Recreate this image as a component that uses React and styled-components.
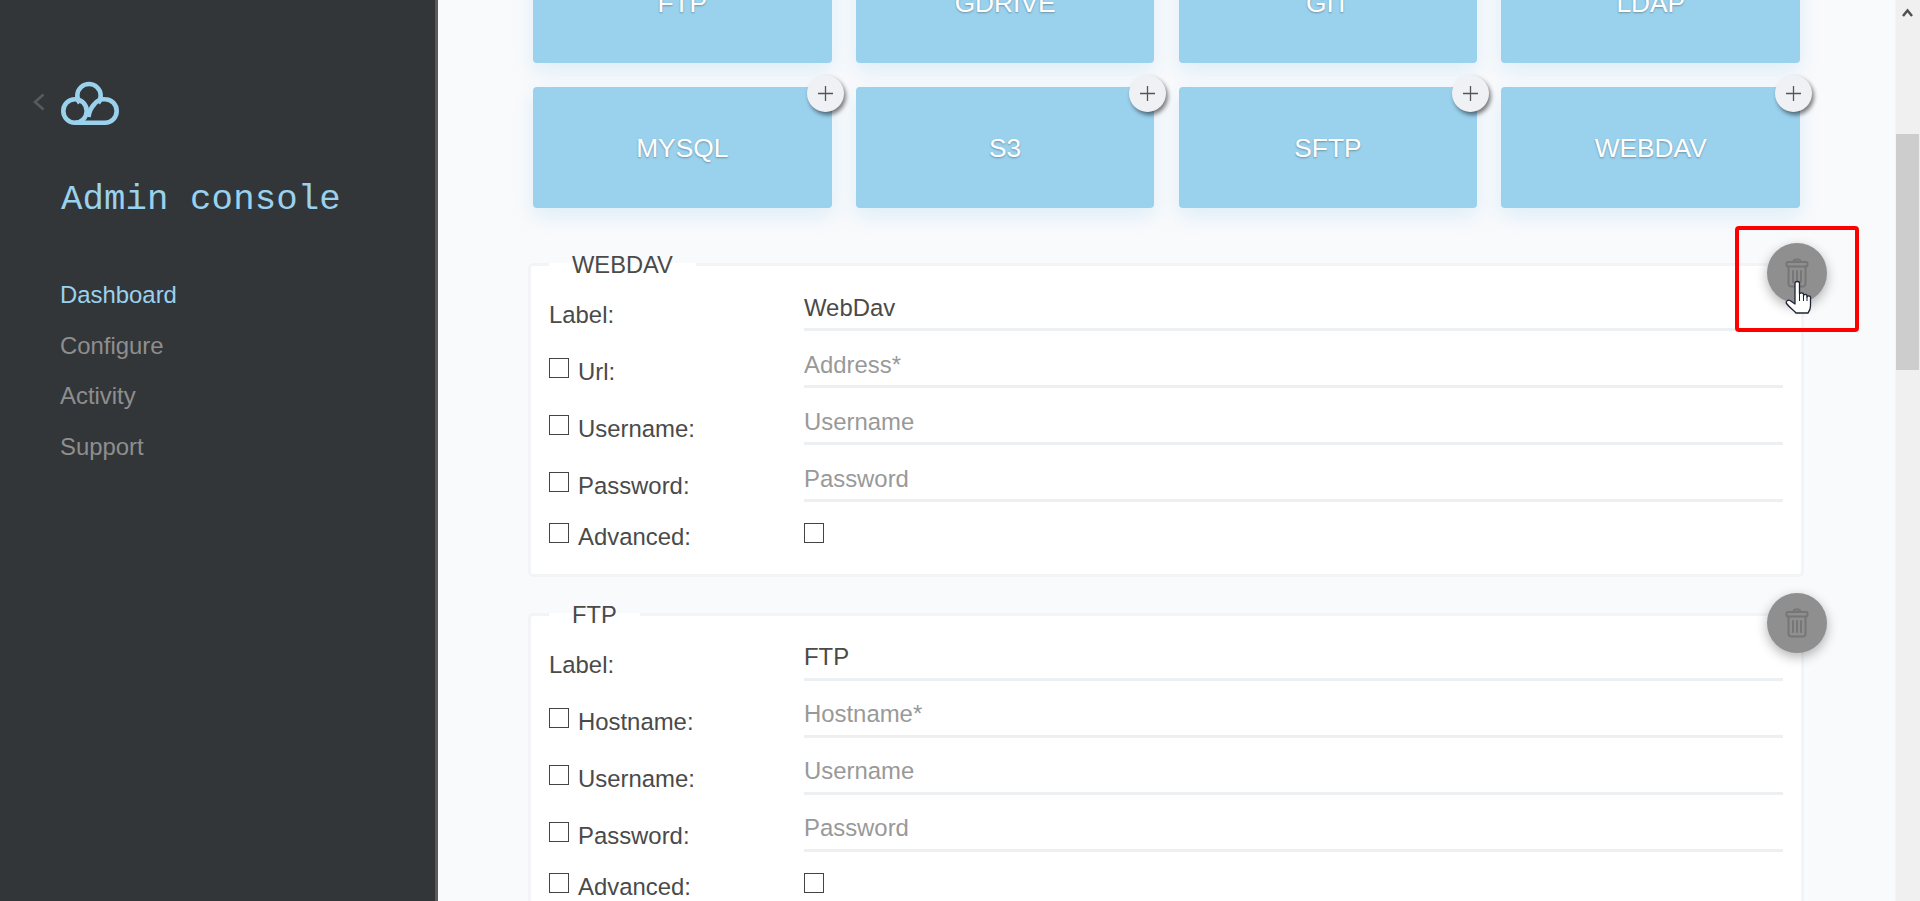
import React from 'react';
import styled, { createGlobalStyle } from 'styled-components';

const GlobalStyle = createGlobalStyle`
  html, body {
    margin: 0;
    height: 100%;
    overflow: hidden;
  }
  body {
    font-family: "Liberation Sans", Arial, sans-serif;
    color: #4a4a4a;
  }
  * {
    box-sizing: border-box;
  }
`;

const Page = styled.div`
  display: flex;
  height: 901px;
  overflow: hidden;
`;

const Sidebar = styled.aside`
  flex: 0 0 438px;
  background: #333639;
  border-right: 3px solid #5a5a5a;
  padding: 81px 0 0 60px;
`;

const LogoRow = styled.div`
  position: relative;
  height: 46px;
`;

const Collapse = styled.svg`
  position: absolute;
  left: -27px;
  top: 12px;
`;

const Title = styled.h1`
  margin: 51px 0 0 1px;
  font-family: "Liberation Mono", monospace;
  font-weight: 400;
  font-size: 35.7px;
  letter-spacing: 0.1px;
  line-height: 44px;
  white-space: nowrap;
  color: #9ad1ed;
`;

const Nav = styled.nav`
  display: flex;
  flex-direction: column;
  margin-top: 48px;
`;

const NavItem = styled.a`
  font-size: 23.9px;
  line-height: 50.6px;
  color: ${p => (p.$active ? '#9ad1ed' : '#8e8e8e')};
`;

const Main = styled.main`
  flex: 1;
  background: #f9fafc;
  padding: 0 95px;
  overflow: hidden;
`;

const Tiles = styled.div`
  display: grid;
  grid-template-columns: repeat(4, 298.5px);
  justify-content: space-between;
  grid-auto-rows: 121px;
  row-gap: 24px;
  margin-top: -58px;
  margin-bottom: 55px;
`;

const Tile = styled.div`
  position: relative;
  display: flex;
  align-items: center;
  justify-content: center;
  padding-top: 1px;
  background: #9ad1ed;
  border-radius: 4px;
  box-shadow: 0 8px 20px rgba(154, 209, 237, 0.3);
  color: #fff;
  font-size: 26.3px;
  text-shadow: 0 1px 2px rgba(0, 0, 0, 0.3);
`;

const AddButton = styled.button`
  position: absolute;
  top: -12px;
  right: -12px;
  display: flex;
  align-items: center;
  justify-content: center;
  width: 37px;
  height: 37px;
  padding: 0;
  border: 0;
  border-radius: 50%;
  background: #f0f1f4;
  box-shadow: 2px 3px 4px rgba(0, 0, 0, 0.5);
`;

const Panel = styled.section`
  position: relative;
  margin: 0 -4px 35.5px -5px;
  padding: 8px 18px 0;
  height: 314px;
  background: #fff;
  border: 3px solid #f3f4f7;
  border-radius: 5px;
`;

const Legend = styled.div`
  position: absolute;
  top: -3px;
  left: 18px;
  height: 6px;
  padding: 0 23px;
  background: #fff;
  font-size: 23.7px;
  line-height: 4px;
`;

const Row = styled.div`
  display: grid;
  grid-template-columns: 255px 1fr;
  align-items: end;
  height: ${p => (p.$short ? '51px' : '57px')};
`;

const FieldLabel = styled.label`
  display: flex;
  align-items: flex-start;
  padding-bottom: 2px;
  font-size: 23.9px;
  line-height: 28px;
`;

const Check = styled.input.attrs({ type: 'checkbox' })`
  appearance: none;
  flex: none;
  width: 20px;
  height: 20px;
  margin: 0 9px 0 0;
  background: #fff;
  border: 1.5px solid #444;
`;

const TextField = styled.input`
  width: 100%;
  height: 40px;
  padding: 0 0 4px;
  border: 0;
  border-bottom: 3px solid #edf0f3;
  outline: none;
  background: none;
  font: inherit;
  font-size: 23.9px;
  color: #4a4a4a;
  &::placeholder {
    color: #999;
    opacity: 1;
  }
`;

const AdvancedToggle = styled.div`
  display: flex;
  padding-bottom: 10px;
`;

const TrashButton = styled.button`
  position: absolute;
  top: -23px;
  right: -26px;
  display: flex;
  align-items: center;
  justify-content: center;
  width: 60px;
  height: 60px;
  padding: 0;
  border: 0;
  border-radius: 50%;
  background: #8f8f8f;
  box-shadow: 0 4px 12px rgba(0, 0, 0, 0.3);
`;

const Highlight = styled.div`
  position: absolute;
  top: -17px;
  left: -32px;
  width: 124px;
  height: 106px;
  border: 4px solid #f00;
  border-radius: 4px;
`;

const Pointer = styled.svg`
  position: absolute;
  left: 18px;
  top: 37px;
`;

const Scrollbar = styled.div`
  flex: 0 0 25px;
  display: flex;
  flex-direction: column;
  background: #f0f0f0;
  border-left: 1px solid #f4f4f4;
  padding-right: 1px;
`;

const ScrollArrow = styled.div`
  display: flex;
  justify-content: center;
  height: 134px;
  padding-top: 8px;
`;

const ScrollThumb = styled.div`
  height: 236px;
  background: #cdcdcd;
`;

const tileRows = ['FTP', 'GDRIVE', 'GIT', 'LDAP', 'MYSQL', 'S3', 'SFTP', 'WEBDAV'];

const panels = [
  {
    name: 'WEBDAV',
    label: 'WebDav',
    fields: [
      { title: 'Url:', placeholder: 'Address*' },
      { title: 'Username:', placeholder: 'Username' },
      { title: 'Password:', placeholder: 'Password' }
    ]
  },
  {
    name: 'FTP',
    label: 'FTP',
    fields: [
      { title: 'Hostname:', placeholder: 'Hostname*' },
      { title: 'Username:', placeholder: 'Username' },
      { title: 'Password:', placeholder: 'Password' }
    ]
  }
];

const Logo = () => (
  <svg width="60" height="46" viewBox="0 0 60 46" fill="none" stroke="#9ad1ed" strokeWidth="4.6">
    <circle cx="15" cy="30" r="11.7" />
    <path d="M15 41.7H45A11.7 11.7 0 0 0 45 18.3A11.7 11.7 0 0 0 34.500 23C31 26.500 29 31 28.500 36" />
    <path d="M19.800 22A11.700 11.700 0 1 1 38.200 22" />
  </svg>
);

const TrashIcon = () => (
  <svg width="24" height="30" viewBox="0 0 24 30" fill="none" stroke="#767676" strokeWidth="2" strokeLinecap="round" strokeLinejoin="round">
    <path d="M8.5 4V3.2A2 2 0 0 1 10.5 1.5H13.5A2 2 0 0 1 15.5 3.2V4" />
    <rect x="1.5" y="4" width="21" height="4.5" rx="1.5" />
    <path d="M3.5 8.5V26A2.5 2.5 0 0 0 6 28.5H18A2.5 2.5 0 0 0 20.5 26V8.5" />
    <path d="M8 13V24M12 13V24M16 13V24" />
  </svg>
);

const HandCursor = () => (
  <Pointer width="28" height="34" viewBox="0 0 28 34">
    <path
      d="M10 3C10 1 14.500 1 14.500 3V14C14.500 12.500 18.500 12.500 18.500 14V15.500C18.500 14 22 14 22 15.500V17C22 15.500 25.500 15.500 25.500 17V26C25.500 29 24.500 31 23 33H11C9 30.500 4.500 27.500 1.500 23.500C0.500 21.500 3 19.500 5 20.500L10 24Z"
      fill="#fff"
      stroke="#1d2433"
      strokeWidth="1.3"
      strokeLinejoin="round"
    />
    <path d="M14.500 14V21M18.500 15V21M22 16.500V21" stroke="#1d2433" strokeWidth="1" fill="none" />
  </Pointer>
);

const App = () => {
  return (
    <Page>
      <GlobalStyle />
      <Sidebar>
        <LogoRow>
          <Collapse width="12" height="18" viewBox="0 0 12 18" fill="none" stroke="#5a5a5a" strokeWidth="2.500">
            <path d="M10.500 1.500L2 9L10.500 16.500" />
          </Collapse>
          <Logo />
        </LogoRow>
        <Title>Admin console</Title>
        <Nav>
          <NavItem $active>Dashboard</NavItem>
          <NavItem>Configure</NavItem>
          <NavItem>Activity</NavItem>
          <NavItem>Support</NavItem>
        </Nav>
      </Sidebar>
      <Main>
        <Tiles>
          {tileRows.map((name, i) => (
            <Tile key={name}>
              {name}
              {i > 3 && (
                <AddButton>
                  <svg width="15" height="15" viewBox="0 0 15 15" stroke="#555" strokeWidth="1.300">
                    <path d="M7.500 0V15M0 7.500H15" />
                  </svg>
                </AddButton>
              )}
            </Tile>
          ))}
        </Tiles>
        {panels.map((panel, i) => (
          <Panel key={panel.name}>
            <Legend>{panel.name}</Legend>
            <TrashButton>
              <TrashIcon />
              {i === 0 && <Highlight />}
              {i === 0 && <HandCursor />}
            </TrashButton>
            <Row>
              <FieldLabel>Label:</FieldLabel>
              <TextField readOnly value={panel.label} />
            </Row>
            {panel.fields.map(field => (
              <Row key={field.title}>
                <FieldLabel>
                  <Check />
                  {field.title}
                </FieldLabel>
                <TextField readOnly placeholder={field.placeholder} />
              </Row>
            ))}
            <Row $short>
              <FieldLabel>
                <Check />
                Advanced:
              </FieldLabel>
              <AdvancedToggle>
                <Check />
              </AdvancedToggle>
            </Row>
          </Panel>
        ))}
      </Main>
      <Scrollbar>
        <ScrollArrow>
          <svg width="11" height="9" viewBox="0 0 11 9" fill="none" stroke="#505050" strokeWidth="2.500">
            <path d="M1 8L5.500 2.500L10 8" />
          </svg>
        </ScrollArrow>
        <ScrollThumb />
      </Scrollbar>
    </Page>
  );
};

export default App;
